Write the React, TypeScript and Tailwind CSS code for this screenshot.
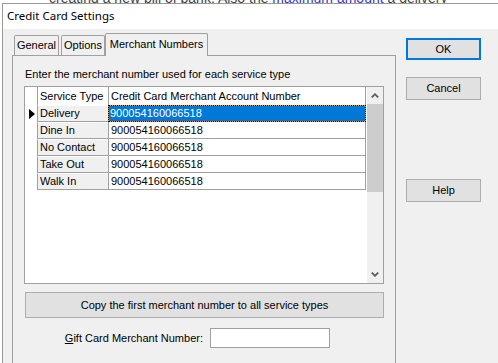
import React from "react";

const rows = [
  { type: "Delivery", number: "900054160066518" },
  { type: "Dine In", number: "900054160066518" },
  { type: "No Contact", number: "900054160066518" },
  { type: "Take Out", number: "900054160066518" },
  { type: "Walk In", number: "900054160066518" },
];

const font = { fontFamily: '"Liberation Sans", Arial, sans-serif' };

function Chevron({ up }: { up?: boolean }) {
  return (
    <svg width="8" height="5" viewBox="0 0 8 5">
      <polyline
        points={up ? "0.8,4.5 4,1.2 7.2,4.5" : "0.8,0.5 4,3.8 7.2,0.5"}
        fill="none"
        stroke="#606060"
        strokeWidth="1.8"
      />
    </svg>
  );
}

export default function App() {
  return (
    <div
      className="w-[498px] h-[363px] overflow-hidden bg-white text-black text-[11px]"
      style={font}
    >
      {/* window behind the dialog */}
      <div className="h-[3px] overflow-hidden pl-[49px]">
        <div className="-mt-[9px] text-[14px] leading-[14px] whitespace-nowrap text-[#444]">
          creating a new bill of bank. Also the{" "}
          <span className="text-[#3a3ac4]">maximum amount</span> a delivery
        </div>
      </div>

      {/* dialog */}
      <div className="ml-[2px] h-[360px] border-l border-t border-[#9a9a9a] bg-[#f0f0f0]">
        {/* title bar */}
        <div
          className="h-[25px] bg-white flex items-center pl-[4px] text-[11.5px] pb-[1px]"
          style={{ fontFamily: '"Noto Sans", "Liberation Sans", sans-serif' }}
        >
          Credit Card Settings
        </div>

        <div className="flex">
          {/* tab control */}
          <div className="ml-[9px] w-[384px] pt-[4px]">
            <div className="flex items-end h-[22px] pl-[2px]">
              <div className="w-[45px] h-[20px] border border-b-0 border-[#a0a0a0] rounded-t-[2px] flex items-center justify-center">
                General
              </div>
              <div className="ml-[2px] w-[44px] h-[20px] border border-b-0 border-[#a0a0a0] rounded-t-[2px] flex items-center justify-center">
                Options
              </div>
              <div className="relative z-10 -mb-px w-[103px] h-[23px] border border-b-0 border-[#a0a0a0] rounded-t-[2px] bg-[#f0f0f0] flex items-center justify-center pb-[2px]">
                Merchant Numbers
              </div>
            </div>

            <div className="h-[320px] border border-[#a0a0a0]">
              <div className="mt-[12px] pl-[12px] h-[13px] leading-[13px]">
                Enter the merchant number used for each service type
              </div>

              {/* grid */}
              <div className="mt-[5px] ml-[11px] w-[360px] h-[198px] border border-[#a0a0a0] bg-white flex">
                <div className="w-[341px] flex flex-col">
                  <div className="flex h-[18px]">
                    <div className="w-[12px]" />
                    <div className="w-[71px] border-l border-[#a0a0a0] pl-[2px] flex items-center">
                      Service Type
                    </div>
                    <div className="w-[258px] border-l border-r border-[#a0a0a0] pl-[2px] flex items-center">
                      Credit Card Merchant Account Number
                    </div>
                  </div>
                  {rows.map((row, i) => (
                    <div key={row.type} className="flex h-[17px]">
                      <div className="w-[12px] flex items-center pl-[4px]">
                        {i === 0 && (
                          <svg width="6" height="10" viewBox="0 0 6 10">
                            <polygon points="0,0 6,5 0,10" fill="#000" />
                          </svg>
                        )}
                      </div>
                      <div className="w-[71px] bg-[#f0f0f0] border-l border-t border-t-white border-b border-[#a0a0a0] pl-[2px] flex items-center">
                        {row.type}
                      </div>
                      {i === 0 ? (
                        <div className="w-[258px] border border-dotted border-black bg-[#f7941d]">
                          <div className="h-full bg-[#0078d7] text-white pl-[1px] flex items-center">
                            {row.number}
                          </div>
                        </div>
                      ) : (
                        <div className="w-[258px] border-l border-r border-b border-[#a0a0a0] pl-[2px] flex items-center">
                          {row.number}
                        </div>
                      )}
                    </div>
                  ))}
                </div>

                {/* scrollbar */}
                <div className="ml-px w-[17px] bg-[#f0f0f0] flex flex-col">
                  <div className="h-[17px] flex items-center justify-center">
                    <Chevron up />
                  </div>
                  <div className="h-[88px] bg-[#cdcdcd]" />
                  <div className="flex-1" />
                  <div className="h-[17px] flex items-center justify-center">
                    <Chevron />
                  </div>
                </div>
              </div>

              <div className="mt-[8px] ml-[12px] w-[359px] h-[26px] bg-[#e1e1e1] border border-[#adadad] flex items-center justify-center">
                Copy the first merchant number to all service types
              </div>

              <div className="mt-[10px] flex items-center">
                <div className="w-[190px] text-right">
                  <span className="underline">G</span>ift Card Merchant Number:
                </div>
                <div className="ml-[7px] w-[120px] h-[20px] bg-white border border-[#a0a0a0]" />
              </div>
            </div>
          </div>

          {/* buttons */}
          <div className="ml-[10px] w-[75px] flex flex-col">
            <div className="mt-[9px] h-[22px] bg-[#e1e1e1] border-2 border-[#0078d7] flex items-center justify-center">
              OK
            </div>
            <div className="mt-[17px] h-[23px] bg-[#e1e1e1] border border-[#adadad] flex items-center justify-center">
              Cancel
            </div>
            <div className="mt-[79px] h-[23px] bg-[#e1e1e1] border border-[#adadad] flex items-center justify-center">
              Help
            </div>
          </div>
        </div>
      </div>
    </div>
  );
}
